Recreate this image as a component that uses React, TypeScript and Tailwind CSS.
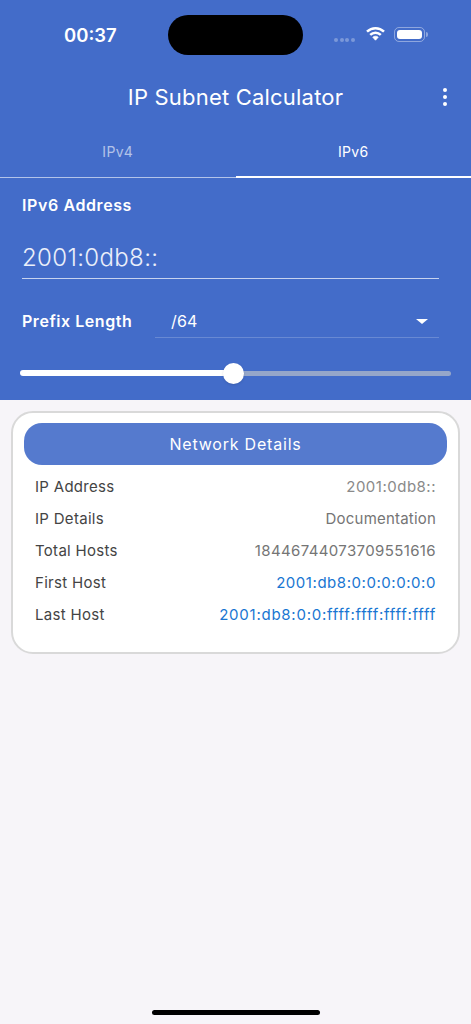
import React from "react";

const rows = [
  { k: "IP Address", v: "2001:0db8::", c: "text-[#8a8a8a] tracking-[0.5px]" },
  { k: "IP Details", v: "Documentation", c: "text-[#757575] tracking-[0.2px]" },
  { k: "Total Hosts", v: "18446744073709551616", c: "text-[#757575] tracking-[0.37px]" },
  { k: "First Host", v: "2001:db8:0:0:0:0:0:0", c: "text-[#1976d2] tracking-[0.55px]" },
  { k: "Last Host", v: "2001:db8:0:0:ffff:ffff:ffff:ffff", c: "text-[#1976d2] tracking-[0.75px]" },
];

export default function App() {
  return (
    <div className="relative w-[471px] h-[1024px] overflow-hidden bg-[#f7f5f9] font-['Inter',sans-serif]">
      <div className="bg-[#436cc9] h-[400px] flex flex-col">
        <div className="relative h-[70px] shrink-0">
          <span className="absolute left-[64px] top-[24px] text-[18.5px] leading-[22px] font-semibold text-white">00:37</span>
          <div className="absolute left-[168px] top-[15px] w-[135px] h-[40px] rounded-[20px] bg-black" />
          <div className="absolute left-[334px] top-[38px] flex gap-[1.5px]">
            {[0, 1, 2, 3].map((i) => (
              <div key={i} className="w-[4px] h-[4px] rounded-full bg-white/30" />
            ))}
          </div>
          <svg className="absolute left-[365px] top-[26px]" width="21" height="16" viewBox="0 0 21 16" fill="none" stroke="white">
            <path d="M2 5.6C6.8 1 14.2 1 19 5.6" strokeWidth="2.5" />
            <path d="M5.2 8.9C8.2 6 12.8 6 15.8 8.9" strokeWidth="2.5" />
            <path d="M7.8 11.2c1.6-1.3 3.8-1.3 5.4 0l-2.7 3z" fill="white" strokeWidth="0.8" />
          </svg>
          <div className="absolute left-[394px] top-[27px] w-[31px] h-[15px] rounded-[5px] border border-white/40 p-[2px]">
            <div className="w-full h-full rounded-[3px] bg-white" />
          </div>
          <div className="absolute left-[426px] top-[32px] w-[1.5px] h-[5px] rounded-r-sm bg-white/40" />
        </div>

        <div className="relative h-[54px] shrink-0 flex items-center justify-center">
          <span className="text-[22px] leading-[28px] text-white tracking-[0.2px]">IP Subnet Calculator</span>
          <svg className="absolute left-[433px] top-[15px]" width="24" height="24" viewBox="0 0 24 24" fill="white">
            <circle cx="12" cy="5" r="2" />
            <circle cx="12" cy="12" r="2" />
            <circle cx="12" cy="19" r="2" />
          </svg>
        </div>

        <div className="h-[54px] shrink-0 flex">
          <div className="flex-1 flex items-center justify-center border-b border-white/60 pt-[2px]">
            <span className="text-[14px] tracking-[0.3px] text-white/60">IPv4</span>
          </div>
          <div className="flex-1 flex items-center justify-center border-b-2 border-white pt-[3px]">
            <span className="text-[14px] tracking-[0.3px] text-white">IPv6</span>
          </div>
        </div>

        <div className="flex flex-col px-[22px]">
          <div className="mt-[17px] text-[16px] leading-[20px] font-semibold text-white tracking-[0.6px]">IPv6 Address</div>
          <div className="mt-[23px] w-[417px] h-[41px] border-b border-white/70 flex items-center text-[24px] font-light text-white/90 tracking-[0.35px]">2001:0db8::</div>
          <div className="mt-[22px] flex items-start h-[40px]">
            <span className="w-[133px] h-[40px] flex items-center text-[16px] font-semibold text-white tracking-[0.55px]">Prefix Length</span>
            <div className="w-[284px] h-[37px] pt-[4px] border-b border-white/20 flex items-center justify-between pl-[16px] pr-[11px]">
              <span className="text-[16px] text-white tracking-[0.2px]">/64</span>
              <div className="w-0 h-0 border-x-[6px] border-x-transparent border-t-[5px] border-t-white" />
            </div>
          </div>
          <div className="relative mt-[20px] -ml-[2px] w-[431px] h-[24px] flex items-center">
            <div className="w-[214px] h-[6px] rounded-l-full bg-white" />
            <div className="flex-1 h-[5px] rounded-r-full bg-[#95a6c9]" />
            <div className="absolute left-[203px] top-[1.5px] w-[21px] h-[21px] rounded-full bg-white shadow-sm" />
          </div>
        </div>
      </div>

      <div className="mx-[11px] mt-[11px] h-[243px] rounded-[22px] border-2 border-[#d9d9d9] bg-white px-[11px] pt-[10px]">
        <div className="h-[42px] rounded-[18px] bg-[#557ace] flex items-center justify-center text-[16px] text-white tracking-[0.8px]">Network Details</div>
        <div className="mt-[6px] flex flex-col px-[11px]">
          {rows.map((r) => (
            <div key={r.k} className="h-[32px] flex items-center justify-between text-[15px]">
              <span className="text-[#444444] tracking-[0.3px]">{r.k}</span>
              <span className={r.c}>{r.v}</span>
            </div>
          ))}
        </div>
      </div>

      <div className="absolute left-[152px] top-[1010px] w-[168px] h-[5px] rounded-full bg-black" />
    </div>
  );
}
